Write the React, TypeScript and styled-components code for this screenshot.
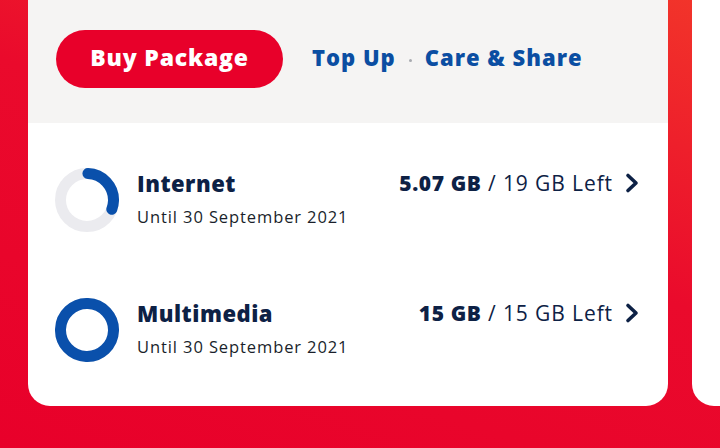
import React from "react";
import styled, { createGlobalStyle } from "styled-components";

const GlobalStyle = createGlobalStyle`
  html, body {
    margin: 0;
    padding: 0;
  }
  body {
    font-family: "Open Sans", "Noto Sans", sans-serif;
    background: #e8002a;
  }
`;

const Page = styled.div`
  width: 720px;
  height: 448px;
  overflow: hidden;
  display: flex;
  align-items: flex-start;
  gap: 24px;
  padding-left: 28px;
  box-sizing: border-box;
  background: linear-gradient(200deg, #f2352a 0%, #ea0a2c 45%, #e8002a 100%);
`;

const Card = styled.div`
  flex: 0 0 640px;
  height: 406px;
  background: #fff;
  border-radius: 0 0 22px 22px;
  overflow: hidden;
  display: flex;
  flex-direction: column;
`;

const NextCard = styled.div`
  flex: 0 0 200px;
  height: 406px;
  background: #fff;
  border-radius: 0 0 22px 22px;
`;

const Actions = styled.div`
  height: 123px;
  background: #f5f4f3;
  display: flex;
  align-items: flex-start;
  padding: 30px 0 0 28px;
  box-sizing: border-box;
`;

const BuyButton = styled.button`
  height: 58px;
  width: 227px;
  padding: 0 0 4px;
  border: none;
  border-radius: 29px;
  background: #e8002a;
  color: #fff;
  font-family: inherit;
  font-weight: 800;
  font-size: 23px;
  letter-spacing: 0.8px;
  cursor: pointer;
`;

const Links = styled.div`
  display: flex;
  align-items: center;
  height: 54px;
  margin-left: 29px;
  gap: 13px;
`;

const LinkText = styled.a`
  color: #0b4ea2;
  font-weight: 800;
  font-size: 22px;
  letter-spacing: 1px;
  text-decoration: none;
`;

const Dot = styled.span`
  width: 3px;
  height: 3px;
  border-radius: 50%;
  background: #a9abb0;
  margin-top: 6px;
`;

const List = styled.div`
  display: flex;
  flex-direction: column;
  gap: 66px;
  padding: 45px 28px 0 27px;
`;

const Row = styled.div`
  display: flex;
  align-items: flex-start;
  height: 64px;
`;

const Info = styled.div`
  display: flex;
  flex-direction: column;
  margin-left: 18px;
  flex: 1;
`;

const Title = styled.div`
  color: #0d2145;
  font-weight: 800;
  font-size: 22px;
  line-height: 30px;
  letter-spacing: 0.5px;
`;

const Sub = styled.div`
  color: #1a1f2b;
  font-size: 16.5px;
  line-height: 22px;
  margin-top: 8px;
  letter-spacing: 0.9px;
`;

const Usage = styled.div`
  display: flex;
  align-items: center;
  height: 30px;
  color: #0d2145;
  font-size: 21px;
  letter-spacing: 0.9px;
  white-space: pre;
`;

const Bold = styled.b`
  font-weight: 800;
  letter-spacing: 0.6px;
`;

const Chevron = styled.svg`
  margin-left: 11px;
  width: 16px;
  height: 22px;
`;

const Ring: React.FC<{ ratio: number }> = ({ ratio }) => {
  const r = 26.5;
  const c = 2 * Math.PI * r;
  const full = ratio >= 1;
  return (
    <svg width="64" height="64" viewBox="0 0 64 64">
      <circle cx="32" cy="32" r={r} fill="none" stroke="#ebebef" strokeWidth="11" />
      <circle
        cx="32"
        cy="32"
        r={r}
        fill="none"
        stroke="#0a50ab"
        strokeWidth="11"
        strokeLinecap={full ? "butt" : "round"}
        strokeDasharray={full ? undefined : `${c * ratio} ${c}`}
        transform="rotate(-88 32 32)"
      />
    </svg>
  );
};

const items = [
  { name: "Internet", used: "5.07 GB", total: "19 GB Left", ratio: 0.3 },
  { name: "Multimedia", used: "15 GB", total: "15 GB Left", ratio: 1 },
];

export default function App() {
  return (
    <>
      <GlobalStyle />
      <Page>
        <Card>
          <Actions>
            <BuyButton>Buy Package</BuyButton>
            <Links>
              <LinkText>Top Up</LinkText>
              <Dot />
              <LinkText>Care &amp; Share</LinkText>
            </Links>
          </Actions>
          <List>
            {items.map((it) => (
              <Row key={it.name}>
                <Ring ratio={it.ratio} />
                <Info>
                  <Title>{it.name}</Title>
                  <Sub>Until 30 September 2021</Sub>
                </Info>
                <Usage>
                  <Bold>{it.used}</Bold>
                  {" / "}
                  {it.total}
                  <Chevron viewBox="0 0 16 22">
                    <polyline
                      points="4,3.5 12,11 4,18.5"
                      fill="none"
                      stroke="#0d2145"
                      strokeWidth="3.6"
                      strokeLinecap="round"
                      strokeLinejoin="round"
                    />
                  </Chevron>
                </Usage>
              </Row>
            ))}
          </List>
        </Card>
        <NextCard />
      </Page>
    </>
  );
}
